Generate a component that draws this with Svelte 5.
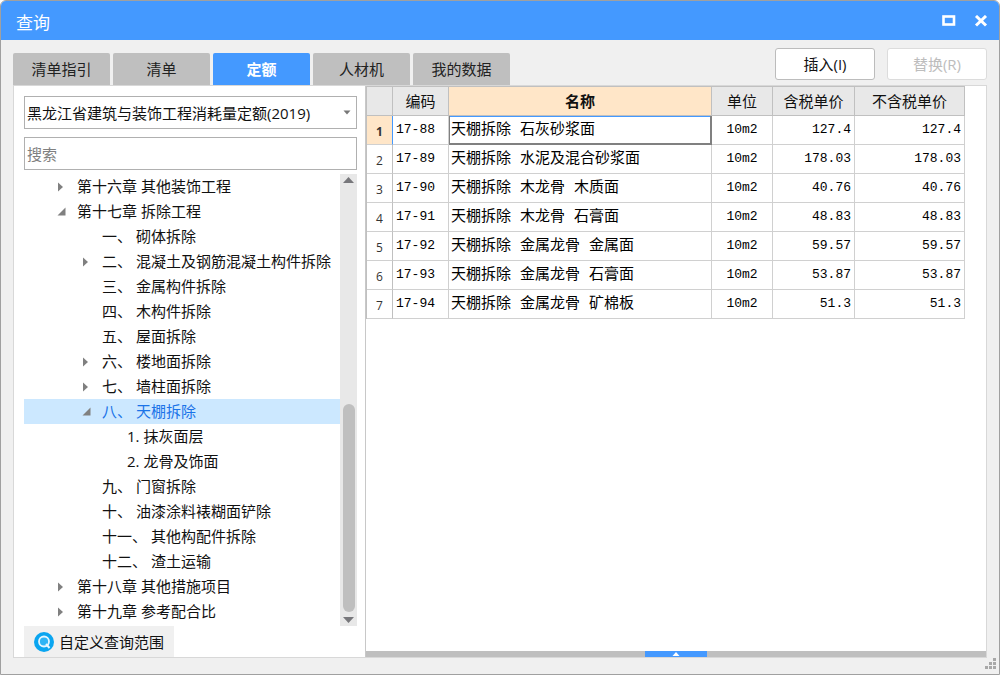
<script>
  const tabs = ['清单指引', '清单', '定额', '人材机', '我的数据'];
  let activeTab = $state('定额');

  const nodes = [
    { level: 1, text: '第十六章 其他装饰工程', state: 'closed' },
    { level: 1, text: '第十七章 拆除工程', state: 'open' },
    { level: 2, text: '一、 砌体拆除' },
    { level: 2, text: '二、 混凝土及钢筋混凝土构件拆除', state: 'closed' },
    { level: 2, text: '三、 金属构件拆除' },
    { level: 2, text: '四、 木构件拆除' },
    { level: 2, text: '五、 屋面拆除' },
    { level: 2, text: '六、 楼地面拆除', state: 'closed' },
    { level: 2, text: '七、 墙柱面拆除', state: 'closed' },
    { level: 2, text: '八、 天棚拆除', state: 'open' },
    { level: 3, text: '1. 抹灰面层' },
    { level: 3, text: '2. 龙骨及饰面' },
    { level: 2, text: '九、 门窗拆除' },
    { level: 2, text: '十、 油漆涂料裱糊面铲除' },
    { level: 2, text: '十一、 其他构配件拆除' },
    { level: 2, text: '十二、 渣土运输' },
    { level: 1, text: '第十八章 其他措施项目', state: 'closed' },
    { level: 1, text: '第十九章 参考配合比', state: 'closed' }
  ];
  let selected = $state(9);

  const rows = [
    { code: '17-88', name: '天棚拆除 石灰砂浆面', price: '127.4' },
    { code: '17-89', name: '天棚拆除 水泥及混合砂浆面', price: '178.03' },
    { code: '17-90', name: '天棚拆除 木龙骨 木质面', price: '40.76' },
    { code: '17-91', name: '天棚拆除 木龙骨 石膏面', price: '48.83' },
    { code: '17-92', name: '天棚拆除 金属龙骨 金属面', price: '59.57' },
    { code: '17-93', name: '天棚拆除 金属龙骨 石膏面', price: '53.87' },
    { code: '17-94', name: '天棚拆除 金属龙骨 矿棉板', price: '51.3' }
  ];
  let current = $state(0);
</script>

<div class="window">
  <header class="titlebar">
    <h1>查询</h1>
    <div class="controls">
      <button aria-label="最大化">
        <svg width="14" height="12" viewBox="0 0 14 12"><rect x="1.5" y="1.5" width="10.5" height="8" fill="none" stroke="#fff" stroke-width="2.6" /></svg>
      </button>
      <button aria-label="关闭">
        <svg width="14" height="12" viewBox="0 0 14 12"><path d="M2 1L12 10.5M12 1L2 10.5" fill="none" stroke="#fff" stroke-width="3" /></svg>
      </button>
    </div>
  </header>

  <div class="toolbar">
    <div class="tabs" role="tablist">
      {#each tabs as tab}
        <button role="tab" class:active={tab === activeTab} aria-selected={tab === activeTab} onclick={() => (activeTab = tab)}>{tab}</button>
      {/each}
    </div>
    <div class="actions">
      <button>插入(I)</button>
      <button disabled>替换(R)</button>
    </div>
  </div>

  <main>
    <aside>
      <div class="combo">
        <select aria-label="定额库">
          <option>黑龙江省建筑与装饰工程消耗量定额(2019)</option>
        </select>
        <svg width="8" height="5" viewBox="0 0 8 5"><path d="M0.5 0.5H7.5L4 4.5Z" fill="#777" /></svg>
      </div>
      <input class="search" type="text" placeholder="搜索" aria-label="搜索" />
      <div class="treebox">
        <div class="tree" role="tree">
          {#each nodes as node, i}
            <button role="treeitem" class="node l{node.level}" class:selected={i === selected} aria-selected={i === selected} onclick={() => (selected = i)}>
              <span class="twisty">
                {#if node.state === 'closed'}
                  <svg width="8" height="10" viewBox="0 0 8 10"><path d="M1 0.5L6 5L1 9.5Z" fill="#808080" /></svg>
                {:else if node.state === 'open'}
                  <svg width="9" height="9" viewBox="0 0 9 9"><path d="M8.5 0.5V8.5H0.5Z" fill="#808080" /></svg>
                {/if}
              </span>
              <span class="label">{node.text}</span>
            </button>
          {/each}
        </div>
        <div class="scrollbar">
          <svg width="11" height="6" viewBox="0 0 11 6"><path d="M0 6L5.5 0L11 6Z" fill="#77777b" /></svg>
          <div class="track"><div class="thumb"></div></div>
          <svg width="11" height="6" viewBox="0 0 11 6"><path d="M0 0L5.5 6L11 0Z" fill="#77777b" /></svg>
        </div>
      </div>
      <button class="custom">
        <svg width="20" height="20" viewBox="0 0 20 20">
          <circle cx="10" cy="10" r="10" fill="#0aa5f0" />
          <circle cx="10" cy="9.5" r="5" fill="#2db4f5" stroke="#e4f6ff" stroke-width="1.8" />
          <path d="M12 12L15.5 16" stroke="#e4f6ff" stroke-width="2" fill="none" />
        </svg>
        <span>自定义查询范围</span>
      </button>
    </aside>

    <section>
      <div class="grid">
        <table>
          <colgroup>
            <col class="c-no" /><col class="c-code" /><col /><col class="c-unit" /><col class="c-price" /><col class="c-net" />
          </colgroup>
          <thead>
            <tr><th></th><th>编码</th><th class="sorted">名称</th><th>单位</th><th>含税单价</th><th>不含税单价</th></tr>
          </thead>
          <tbody>
            {#each rows as row, i}
              <tr class:current={i === current} onclick={() => (current = i)}>
                <th scope="row">{i + 1}</th>
                <td class="mono">{row.code}</td>
                <td class="name">{row.name}</td>
                <td class="mono unit">10m2</td>
                <td class="mono num">{row.price}</td>
                <td class="mono num">{row.price}</td>
              </tr>
            {/each}
          </tbody>
        </table>
      </div>
      <div class="splitter">
        <button aria-label="展开">
          <svg width="8" height="4" viewBox="0 0 8 4"><path d="M0.5 4L4 0L7.5 4Z" fill="#fff" /></svg>
        </button>
      </div>
    </section>
  </main>

  <footer>
    <svg width="11" height="11" viewBox="0 0 11 11" fill="#a8a8a8">
      <path d="M8 0h3v3h-3zM4 4h3v3h-3zM8 4h3v3h-3zM0 8h3v3h-3zM4 8h3v3h-3zM8 8h3v3h-3z" />
    </svg>
  </footer>
</div>

<style>
  :global(body) {
    margin: 0;
    background: #fff;
  }
  * {
    box-sizing: border-box;
  }
  .window {
    display: flex;
    flex-direction: column;
    min-height: 100vh;
    border: 1px solid #a0a0a0;
    border-radius: 6px 6px 0 0;
    overflow: hidden;
    background: #f0f0f0;
    color: #111;
    font-family: 'Open Sans', 'Noto Sans CJK SC', sans-serif;
    font-size: 15px;
    line-height: 24px;
  }
  button,
  input,
  select {
    margin: 0;
    padding: 0;
    border: 0;
    font: inherit;
    color: inherit;
    background: none;
  }
  svg {
    display: block;
    flex: none;
  }
  .titlebar {
    display: flex;
    align-items: center;
    justify-content: space-between;
    height: 39px;
    padding: 0 11px 0 15px;
    background: #4499ff;
    color: #fff;
  }
  h1 {
    margin: 0;
    padding-top: 4px;
    font-size: 17px;
    font-weight: 400;
  }
  .controls {
    display: flex;
    gap: 18px;
  }
  .toolbar {
    display: flex;
    justify-content: space-between;
    height: 45px;
    padding: 0 12px;
  }
  .tabs {
    display: flex;
    align-items: flex-end;
    gap: 3px;
  }
  .tabs button {
    width: 97px;
    height: 32px;
    border-radius: 2px 2px 0 0;
    background: #bfbfbf;
    color: #222;
  }
  .tabs .active {
    background: #4499ff;
    color: #fff;
    font-weight: 700;
  }
  .actions {
    display: flex;
    gap: 12px;
    padding-top: 8px;
  }
  .actions button {
    width: 100px;
    height: 32px;
    border: 1px solid #bcbcbc;
    border-radius: 3px;
    background: #fff;
  }
  .actions button:disabled {
    border-color: #dcdcdc;
    color: #bdbdbd;
  }
  main {
    flex: 1;
    display: flex;
    margin: 0 12px;
    border: 1px solid #d8d8d8;
    background: #fff;
  }
  aside {
    display: flex;
    flex-direction: column;
    width: 352px;
    padding: 10px 8px 0 10px;
    border-right: 1px solid #c8c8c8;
  }
  .combo {
    display: grid;
    align-items: center;
  }
  .combo > * {
    grid-area: 1 / 1;
  }
  .combo svg {
    justify-self: end;
    margin-right: 6px;
    pointer-events: none;
  }
  .combo select,
  .search {
    width: 100%;
    height: 33px;
    padding: 0 2px;
    border: 1px solid #b0b0b0;
    border-radius: 0;
    background: #fff;
    appearance: none;
  }
  .search {
    margin-top: 8px;
  }
  .search::placeholder {
    color: #808080;
    opacity: 1;
  }
  .treebox {
    flex: 1;
    display: flex;
    margin-top: 4px;
  }
  .tree {
    flex: 1;
  }
  .node {
    display: flex;
    align-items: center;
    width: 100%;
    height: 25px;
    text-align: left;
    white-space: nowrap;
  }
  .node.selected {
    background: #cce8ff;
    color: #1a73e8;
  }
  .l1 {
    padding-left: 28px;
  }
  .l2 {
    padding-left: 53px;
  }
  .l3 {
    padding-left: 78px;
  }
  .twisty {
    display: flex;
    width: 25px;
    padding-left: 5px;
  }
  .label {
    padding-bottom: 2px;
  }
  .scrollbar {
    display: flex;
    flex-direction: column;
    align-items: center;
    width: 17px;
    padding: 3px 0;
    background: #e8e8e8;
  }
  .track {
    flex: 1;
    display: flex;
    flex-direction: column;
    justify-content: flex-end;
    padding: 4px 0 5px;
  }
  .thumb {
    width: 12px;
    height: 49%;
    border-radius: 6px;
    background: #bfbfbf;
  }
  .custom {
    display: flex;
    align-items: center;
    align-self: flex-start;
    gap: 5px;
    height: 31px;
    padding: 0 10px;
    background: #f0f0f0;
  }
  section {
    flex: 1;
    display: flex;
    flex-direction: column;
    min-width: 0;
  }
  .grid {
    flex: 1;
    padding: 0 21px 0 0;
  }
  table {
    width: 100%;
    table-layout: fixed;
    border-collapse: separate;
    border-spacing: 0;
    border-top: 1px solid #c0c0c0;
    border-left: 1px solid #c0c0c0;
  }
  .c-no {
    width: 26px;
  }
  .c-code {
    width: 56px;
  }
  .c-unit {
    width: 61px;
  }
  .c-price {
    width: 82px;
  }
  .c-net {
    width: 110px;
  }
  th,
  td {
    height: 29px;
    padding: 0 3px;
    border: solid #d0d0d0;
    border-width: 0 1px 1px 0;
    font-weight: 400;
    white-space: nowrap;
  }
  thead th {
    border-color: #c0c0c0;
    background: #e8e8e8;
  }
  thead .sorted {
    background: #ffe6c8;
    font-weight: 700;
  }
  tbody th {
    padding: 3px 0 0;
    border-right-color: #c0c0c0;
    font-family: 'Open Sans', sans-serif;
    font-size: 12px;
    color: #333;
  }
  .mono {
    font-family: 'Liberation Mono', monospace;
    font-size: 13px;
    color: #000;
  }
  .name {
    padding: 2px 2px 0;
    font-family: 'Liberation Mono', 'Noto Sans CJK SC', monospace;
    color: #000;
  }
  .unit {
    text-align: center;
  }
  .num {
    text-align: right;
  }
  .current th {
    border-right-color: #4499ff;
    background: #ffe6c8;
    font-weight: 700;
  }
  .current .name {
    box-shadow: inset 1px 0 #808080, inset -1px -1px #808080, inset 0 1px #4499ff;
    border-right-color: #808080;
    border-bottom-color: #808080;
  }
  .splitter {
    display: flex;
    justify-content: center;
    height: 6px;
    background: #bfbfbf;
  }
  .splitter button {
    display: flex;
    align-items: center;
    justify-content: center;
    width: 62px;
    height: 6px;
    background: #4499ff;
  }
  footer {
    display: flex;
    justify-content: flex-end;
    height: 16px;
    padding: 0 3px;
  }
</style>
